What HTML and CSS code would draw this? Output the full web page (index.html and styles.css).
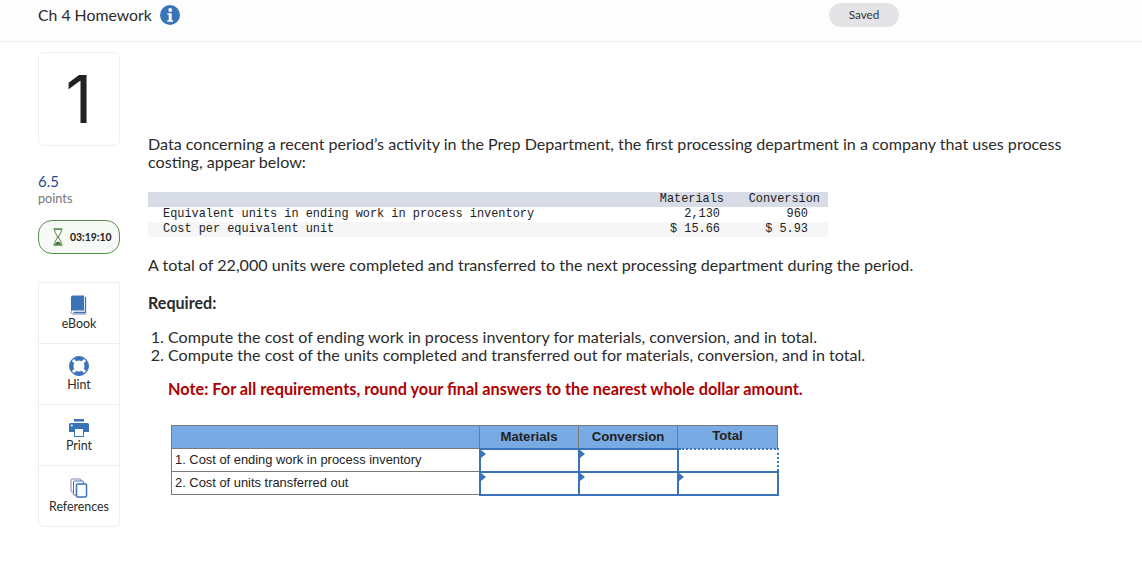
FILE: index.html
```html
<!DOCTYPE html>
<html lang="en">
<head>
<meta charset="utf-8">
<title>Ch 4 Homework</title>
<link rel="stylesheet" href="styles.css">
</head>
<body>
<header class="topbar">
  <div class="title-wrap">
    <span class="title">Ch 4 Homework</span>
    <svg class="info" viewBox="0 0 20 20" width="20" height="20"><circle cx="10" cy="10" r="10" fill="#3b73b9"/><circle cx="10.2" cy="5" r="1.9" fill="#fff"/><path d="M7.4 8.2h4.3v7h1.4v1.6H7.3v-1.6h1.4V9.8H7.4z" fill="#fff"/></svg>
  </div>
  <span class="saved">Saved</span>
</header>
<div class="page">
  <aside class="side">
    <div class="qnum">1</div>
    <div class="points"><div class="pts-val">6.5</div><div class="pts-lbl">points</div></div>
    <div class="timer">
      <svg viewBox="0 0 12 18" width="12" height="18"><path d="M1.5 1h9M1.5 17h9" stroke="#5a8f4e" stroke-width="1.6" fill="none"/><path d="M2.5 1.5c0 4 3 5.5 3 7.5s-3 3.500-3 7.500h7c0-4-3-5.500-3-7.500s3-3.500 3-7.500z" fill="#fff" stroke="#6b8f5e" stroke-width="1.1"/><path d="M3 16.500c.5-2 2-3 3-3s2.500 1 3 3z" fill="#3f7d35"/></svg>
      <span>03:19:10</span>
    </div>
    <nav class="tools">
      <a class="tool">
        <svg viewBox="0 0 18 20" width="18" height="20"><path d="M1 2.500A2 2 0 0 1 3 .5h11v15H3a2 2 0 0 0-2 1z" fill="#3b73b9"/><path d="M15.500 2v15.500H3.500" fill="none" stroke="#3b73b9" stroke-width="1.300"/><path d="M1 16.500A2 2 0 0 0 3 19h13" fill="none" stroke="#8a7fb0" stroke-width="1"/></svg>
        <span>eBook</span>
      </a>
      <a class="tool">
        <svg viewBox="0 0 20 20" width="20" height="20"><circle cx="10" cy="10" r="7.500" fill="none" stroke="#3b73b9" stroke-width="4"/><circle cx="10" cy="10" r="9.500" fill="none" stroke="#3b73b9" stroke-width="1"/><path d="M4 4l3.500 3.500M16 4l-3.500 3.500M4 16l3.500-3.500M16 16l-3.500-3.500" stroke="#fff" stroke-width="3"/></svg>
        <span>Hint</span>
      </a>
      <a class="tool">
        <svg viewBox="0 0 20 18" width="20" height="18"><rect x="5" y="0" width="10" height="2.500" fill="#3b73b9"/><path d="M1.500 4h17a1.500 1.500 0 0 1 1.500 1.500V13h-20V5.500A1.500 1.500 0 0 1 1.500 4z" fill="#3b73b9"/><circle cx="2.800" cy="6.500" r="1" fill="#fff"/><rect x="5.500" y="9.500" width="9" height="8" fill="#fff" stroke="#3b73b9"/></svg>
        <span>Print</span>
      </a>
      <a class="tool">
        <svg viewBox="0 0 18 20" width="18" height="20"><rect x="1" y="1" width="10" height="13" rx="1" fill="#fff" stroke="#8a7fb0"/><rect x="3.500" y="3" width="10" height="14" rx="1" fill="#fff" stroke="#3b73b9"/><rect x="6.500" y="6" width="10" height="13" rx="1" fill="#fff" stroke="#3b73b9" stroke-width="1.500"/></svg>
        <span>References</span>
      </a>
    </nav>
  </aside>
  <main class="main">
    <p class="intro">Data concerning a recent period’s activity in the Prep Department, the first processing department in a company that uses process costing, appear below:</p>
    <table class="data">
      <thead>
        <tr><th class="lbl"></th><th class="mat">Materials</th><th class="con">Conversion</th></tr>
      </thead>
      <tbody>
        <tr><td class="lbl">Equivalent units in ending work in process inventory</td><td class="mat v">2,130</td><td class="con v">960</td></tr>
        <tr class="alt"><td class="lbl">Cost per equivalent unit</td><td class="mat v">$ 15.66</td><td class="con v">$ 5.93</td></tr>
      </tbody>
    </table>
    <p class="total">A total of 22,000 units were completed and transferred to the next processing department during the period.</p>
    <p class="req">Required:</p>
    <ol class="list">
      <li>Compute the cost of ending work in process inventory for materials, conversion, and in total.</li>
      <li>Compute the cost of the units completed and transferred out for materials, conversion, and in total.</li>
    </ol>
    <p class="note">Note: For all requirements, round your final answers to the nearest whole dollar amount.</p>
    <table class="answer">
      <thead>
        <tr><th class="c0"></th><th class="c1">Materials</th><th class="c2">Conversion</th><th class="c3"><span class="raised">Total</span></th></tr>
      </thead>
      <tbody>
        <tr><td class="rl">1. Cost of ending work in process inventory</td><td class="inp"></td><td class="inp"></td><td class="inp dotted"></td></tr>
        <tr><td class="rl">2. Cost of units transferred out</td><td class="inp"></td><td class="inp"></td><td class="inp"></td></tr>
      </tbody>
    </table>
  </main>
</div>
</body>
</html>
```
FILE: styles.css
```css
* { box-sizing: border-box; }
html, body { margin: 0; padding: 0; }
p { margin: 0; }
body {
  width: 1142px;
  height: 588px;
  overflow: hidden;
  background: #fff;
  color: #2b2b2b;
  font-family: "Lato", "Liberation Sans", sans-serif;
}
.topbar {
  height: 42px;
  display: flex;
  align-items: flex-start;
  background: #fdfdfd;
  border-bottom: 1px solid #eeeeee;
  padding: 3px 0 0 38px;
}
.title-wrap {
  width: 791px;
  display: flex;
  align-items: center;
  gap: 8px;
  height: 23px;
}
.title { font-size: 15.8px; color: #2b2b2b; }
.info { display: block; }
.saved {
  width: 70px;
  height: 24px;
  border-radius: 12px;
  background: #e4e3e6;
  font-size: 11.7px;
  line-height: 22px;
  text-align: center;
  color: #333;
}
.page { display: flex; padding-left: 38px; }
.side { width: 82px; flex: none; padding-top: 10px; }
.qnum {
  width: 82px;
  height: 94px;
  border: 1px solid #f0f0f0;
  border-radius: 6px;
  display: flex;
  align-items: center;
  justify-content: center;
  font-family: "Inter", sans-serif;
  font-size: 66px;
  line-height: 1;
  color: #222;
}
.points { margin-top: 26px; }
.pts-val { font-size: 15px; line-height: 18px; color: #1f4f8b; }
.pts-lbl { font-size: 12.7px; line-height: 16px; color: #777; }
.timer {
  margin-top: 14px;
  height: 34px;
  border: 1px solid #5a8f4e;
  border-radius: 14px;
  background: #f6f9f5;
  display: flex;
  align-items: center;
  gap: 6px;
  padding-left: 13px;
  font-size: 10.4px;
  font-weight: 700;
  color: #222;
}
.tools {
  margin-top: 28px;
  border: 1px solid #eeeeee;
  border-radius: 0 0 6px 6px;
}
.tool {
  height: 61px;
  display: flex;
  flex-direction: column;
  align-items: center;
  justify-content: flex-end;
  gap: 2px;
  padding-bottom: 13px;
  font-size: 12.4px;
  line-height: 13px;
  color: #2b2b2b;
  border-bottom: 1px solid #eeeeee;
}
.tool:last-child { border-bottom: 0; height: 60px; }
.tool svg { display: block; }
.main { margin-left: 28px; width: 920px; padding-top: 93px; font-size: 16.1px; line-height: 18px; }
.intro { height: 36px; }
.data {
  margin-top: 21px;
  width: 680px;
  border-collapse: collapse;
  table-layout: fixed;
  font-family: "Liberation Mono", monospace;
  font-size: 11.9px;
  line-height: 15px;
  color: #222;
}
.data th, .data td { padding: 0; font-weight: 400; white-space: pre; }
.data thead tr { background: #d7dce7; }
.data .alt { background: #f6f6f6; }
.data .lbl { width: 492px; padding-left: 15px; text-align: left; }
.data .mat { width: 92px; text-align: right; padding-right: 8px; }
.data .con { width: 96px; text-align: right; padding-right: 8px; }
.data .v.mat { padding-right: 12px; }
.data .v.con { padding-right: 20px; }
.total { margin-top: 19px; }
.req { margin-top: 20px; font-weight: 700; }
.list { margin: 16px 0 0; padding: 0 0 0 20px; }
.note { margin-top: 16px; margin-left: 20px; font-weight: 700; color: #b00000; font-size: 16.3px; }
.answer {
  margin-top: 27px;
  margin-left: 23px;
  border-collapse: collapse;
  table-layout: fixed;
  width: 606px;
  font-family: "Liberation Sans", sans-serif;
  font-size: 12.9px;
  color: #222;
}
.answer th {
  height: 23px;
  background: #78aae3;
  border: 1px solid #7a7a7a;
  font-size: 13.2px;
  padding: 0;
}
.raised { display: block; margin-top: -2px; }
.answer td { height: 23px; border: 1px solid #7a7a7a; padding: 0 0 0 3px; }
.answer .c0 { width: 308px; }
.answer .c1, .answer .c2 { width: 99px; }
.answer .c3 { width: 100px; }
.answer td.inp {
  border: 2px solid #3b73b9;
  position: relative;
}
.answer td.inp::before {
  content: "";
  position: absolute;
  left: 0;
  top: 0;
  border-left: 5px solid #3b73b9;
  border-top: 4px solid transparent;
  border-bottom: 4px solid transparent;
}
.answer td.dotted { border: 2px dotted #3b73b9; }
.answer td.dotted::before { display: none; }
```
